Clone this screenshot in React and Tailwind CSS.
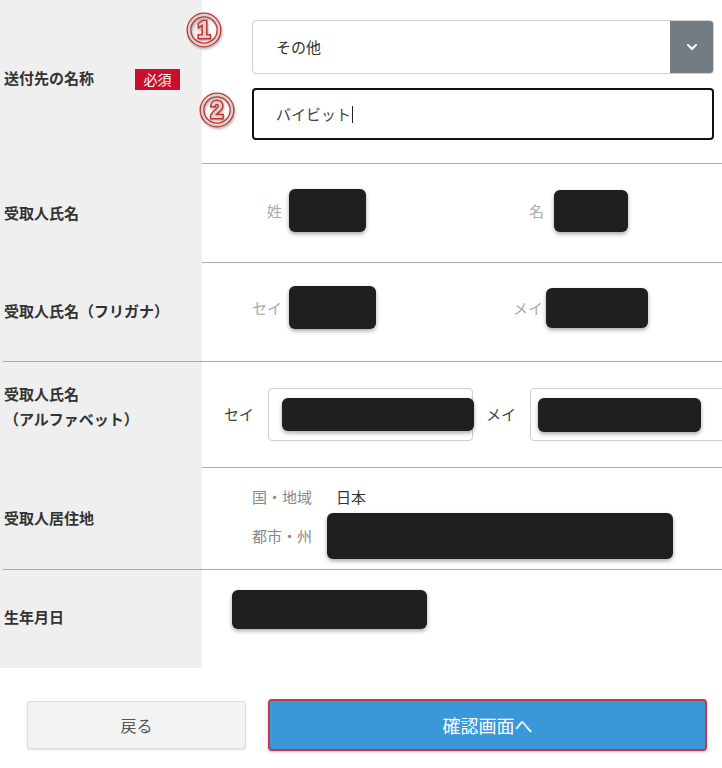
import React from 'react';

const font = { fontFamily: '"Noto Sans CJK JP", "Noto Sans", sans-serif' };

function Blot({ className }) {
    return <div className={`bg-[#1f1f1f] rounded-[6px] shadow-[0_2px_4px_rgba(0,0,0,0.35)] ${className}`} />;
}

function Line() {
    return (
        <div className="flex h-px">
            <div className="w-[3px] bg-[#efefef]" />
            <div className="flex-1 bg-[#ababab]" />
        </div>
    );
}

function Label({ children, className = '' }) {
    return (
        <div className={`w-[202px] shrink-0 bg-[#efefef] pl-[4px] flex items-center text-[15px] font-bold text-[#333] leading-[25px] ${className}`}>
            {children}
        </div>
    );
}

// annotation number: grey ring and digit outlined in red
function Marker({ n, className }) {
    return (
        <svg width="36" height="36" viewBox="0 0 36 36" className={`absolute drop-shadow-[1px_2px_1px_rgba(0,0,0,0.25)] ${className}`}>
            <circle cx="18" cy="18" r="15" fill="none" stroke="#c8322f" strokeWidth="5" />
            <circle cx="18" cy="18" r="15" fill="none" stroke="#d4d4d4" strokeWidth="2.4" />
            <text
                x="18"
                y="26"
                textAnchor="middle"
                fontSize="23"
                fontWeight="bold"
                fontFamily="Liberation Sans, sans-serif"
                fill="#d4d4d4"
                stroke="#c8322f"
                strokeWidth="3"
                paintOrder="stroke"
            >
                {n}
            </text>
        </svg>
    );
}

export default function App() {
    return (
        <div className="w-[722px] h-[768px] bg-white overflow-hidden relative" style={font}>
            {/* 送付先の名称 */}
            <div className="flex h-[163px] relative">
                <Label>
                    <span className="inline-block w-[131px] -mt-[9px]">送付先の名称</span>
                    <span className="-mt-[5px] bg-[#c8102e] text-white text-[14px] font-normal leading-[21px] w-[45px] text-center">必須</span>
                </Label>
                <div className="flex-1 pl-[50px] pr-[8px] pt-[20px] flex flex-col gap-[14px]">
                    <div className="h-[54px] flex border border-[#cfcfcf] rounded-[4px] overflow-hidden">
                        <div className="flex-1 flex items-center pl-[23px] text-[15px] text-[#333]">その他</div>
                        <div className="w-[43px] bg-[#737b83] flex items-center justify-center">
                            <svg width="12" height="8" viewBox="0 0 12 8">
                                <path d="M2 2 L6 6 L10 2" stroke="white" strokeWidth="2" fill="none" strokeLinecap="round" strokeLinejoin="round" />
                            </svg>
                        </div>
                    </div>
                    <div className="h-[52px] border-2 border-[#111] rounded-[4px] flex items-center pl-[22px] text-[15px] text-[#444]">
                        バイビット<span className="inline-block w-px h-[17px] bg-[#222] ml-[1px]" />
                    </div>
                </div>
                <Marker n="1" className="left-[186px] top-[12px]" />
                <Marker n="2" className="left-[199px] top-[92px]" />
            </div>
            <Line />

            {/* 受取人氏名 */}
            <div className="flex h-[98px]">
                <Label className="-mt-[2px]">受取人氏名</Label>
                <div className="flex-1 flex items-start pt-[25px] pl-[65px] text-[15px] text-[#aaa] leading-[43px]">
                    <div className="w-[262px] flex items-center">
                        <span className="mr-[7px]">姓</span>
                        <Blot className="w-[77px] h-[43px]" />
                    </div>
                    <div className="flex items-center">
                        <span className="mr-[10px]">名</span>
                        <Blot className="w-[74px] h-[42px]" />
                    </div>
                </div>
            </div>
            <Line />

            {/* フリガナ */}
            <div className="flex h-[98px]">
                <Label className="-mt-[4px]">受取人氏名（フリガナ）</Label>
                <div className="flex-1 flex items-start pt-[23px] pl-[50px] text-[15px] text-[#aaa] leading-[43px]">
                    <div className="w-[261px] flex items-center">
                        <span className="mr-[7px]">セイ</span>
                        <Blot className="w-[87px] h-[43px]" />
                    </div>
                    <div className="flex items-center">
                        <span className="mr-[3px]">メイ</span>
                        <Blot className="w-[102px] h-[40px]" />
                    </div>
                </div>
            </div>
            <Line />

            {/* アルファベット */}
            <div className="flex h-[105px]">
                <Label>
                    <div className="-mt-[17px]">
                        <div>受取人氏名</div>
                        <div>（アルファベット）</div>
                    </div>
                </Label>
                <div className="flex-1 flex items-center pl-[22px] text-[15px] text-[#444] whitespace-nowrap">
                    <span className="mr-[14px] shrink-0">セイ</span>
                    <div className="w-[205px] h-[53px] shrink-0 border border-[#cfcfcf] rounded-[4px] flex items-center pl-[13px]">
                        <Blot className="w-[192px] h-[33px] shrink-0" />
                    </div>
                    <span className="ml-[13px] mr-[14px] shrink-0">メイ</span>
                    <div className="w-[200px] h-[53px] shrink-0 border border-[#cfcfcf] rounded-[4px] flex items-center pl-[7px]">
                        <Blot className="w-[163px] h-[34px] shrink-0" />
                    </div>
                </div>
            </div>
            <Line />

            {/* 居住地 */}
            <div className="flex h-[101px]">
                <Label className="-mt-[3px]">受取人居住地</Label>
                <div className="flex-1 pl-[50px] pt-[17px] text-[15px]">
                    <div className="flex items-center h-[24px]">
                        <span className="w-[84px] text-[#888]">国・地域</span>
                        <span className="text-[#333]">日本</span>
                    </div>
                    <div className="flex items-center mt-[4px]">
                        <span className="w-[75px] text-[#888]">都市・州</span>
                        <Blot className="w-[346px] h-[46px]" />
                    </div>
                </div>
            </div>
            <Line />

            {/* 生年月日 */}
            <div className="flex h-[98px]">
                <Label><span className="-mt-[6px]">生年月日</span></Label>
                <div className="flex-1 pl-[30px] pt-[20px]">
                    <Blot className="w-[195px] h-[39px]" />
                </div>
            </div>

            {/* Buttons */}
            <div className="flex items-center pl-[27px] mt-[31px]">
                <button className="w-[219px] h-[48px] bg-[#f3f3f3] border border-[#dcdcdc] rounded-[3px] shadow-[0_1px_2px_rgba(0,0,0,0.12)] text-[16px] text-[#555]">
                    戻る
                </button>
                <button className="ml-[22px] w-[439px] h-[52px] bg-[#3a97d8] border-2 border-[#c23a52] rounded-[4px] shadow-[0_1px_3px_rgba(0,0,0,0.25)] text-[18px] text-white">
                    確認画面へ
                </button>
            </div>
        </div>
    );
}
